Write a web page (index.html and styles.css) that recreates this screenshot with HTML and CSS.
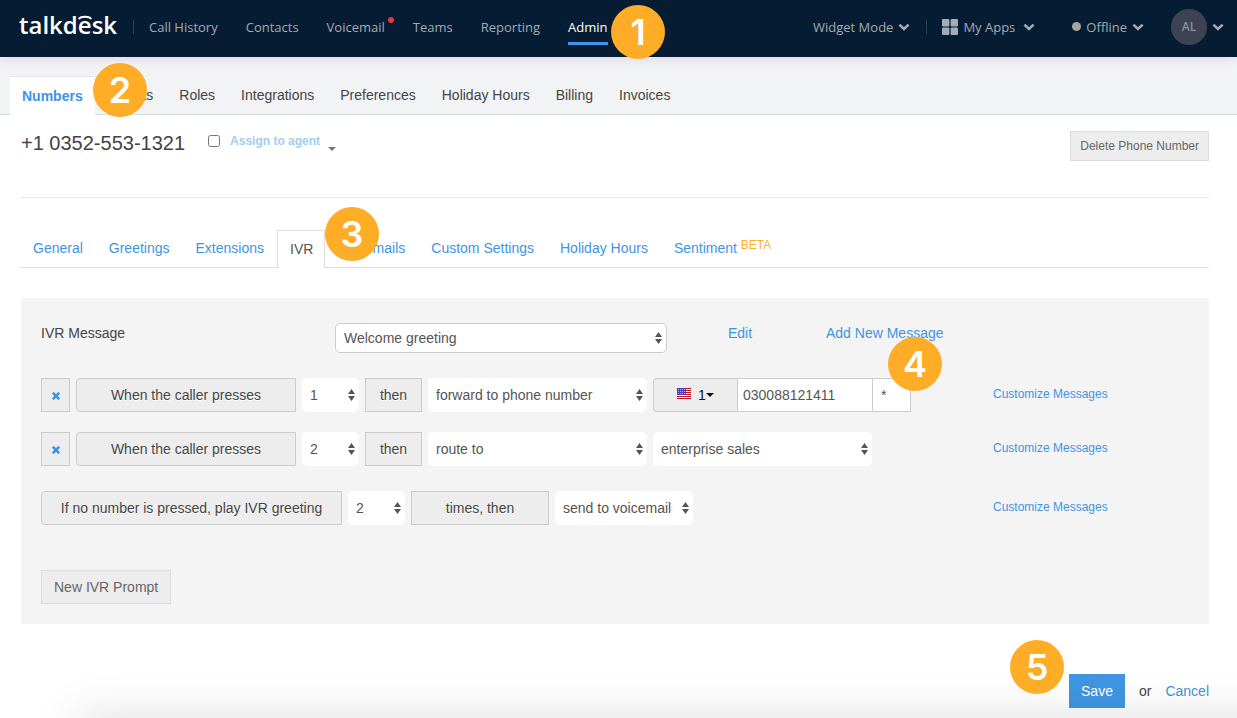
FILE: index.html
```html
<!DOCTYPE html>
<html lang="en">
<head>
    <meta charset="UTF-8">
    <meta name="viewport" content="width=device-width, initial-scale=1.0">
    <title>Talkdesk - IVR</title>
    <link rel="stylesheet" href="styles.css">
</head>
<body>
    <!-- Shared icons -->
    <svg class="icon-defs" aria-hidden="true">
        <symbol id="chevron" viewBox="0 0 12 8">
            <path d="M1.4 1.6 6 6l4.6-4.4" fill="none" stroke="currentColor" stroke-width="2.6"/>
        </symbol>
        <symbol id="remove" viewBox="0 0 8 8">
            <path d="M.8.8l6.4 6.4M7.2.8L.8 7.2" fill="none" stroke="currentColor" stroke-width="2.6"/>
        </symbol>
    </svg>

    <!-- Top bar -->
    <header class="topbar">
        <a class="logo" href="#">talkd<span class="logo-e">e<svg viewBox="0 0 14 5" aria-hidden="true"><path d="M1 4.2C2 .8 12 .8 13 4.2" fill="none" stroke="currentColor" stroke-width="2"/></svg></span>sk</a>
        <nav class="main-nav">
            <a href="#">Call History</a>
            <a href="#">Contacts</a>
            <a class="has-alert" href="#">Voicemail</a>
            <a href="#">Teams</a>
            <a href="#">Reporting</a>
            <span class="marked">
                <a class="active" href="#">Admin</a>
                <span class="step step-1">1</span>
            </span>
        </nav>
        <div class="tools">
            <button class="tool widget-mode">Widget Mode <svg class="chevron"><use href="#chevron"/></svg></button>
            <button class="tool apps">
                <svg class="grid-icon" viewBox="0 0 16 16" fill="currentColor"><rect width="7.4" height="7.4" rx="1"/><rect x="8.6" width="7.4" height="7.4" rx="1"/><rect y="8.6" width="7.4" height="7.4" rx="1"/><rect x="8.6" y="8.6" width="7.4" height="7.4" rx="1"/></svg>
                My Apps <svg class="chevron"><use href="#chevron"/></svg>
            </button>
            <button class="tool status"><span class="dot"></span>Offline <svg class="chevron"><use href="#chevron"/></svg></button>
            <button class="tool account"><span class="avatar">AL</span><svg class="chevron"><use href="#chevron"/></svg></button>
        </div>
    </header>

    <!-- Admin sections -->
    <nav class="sub-nav">
        <span class="marked">
            <a class="active" href="#">Numbers</a>
            <span class="step step-2">2</span>
        </span>
        <a href="#">Agents</a>
        <a href="#">Roles</a>
        <a href="#">Integrations</a>
        <a href="#">Preferences</a>
        <a href="#">Holiday Hours</a>
        <a href="#">Billing</a>
        <a href="#">Invoices</a>
    </nav>

    <main class="content">
        <div class="number-bar">
            <h1>+1 0352-553-1321</h1>
            <input type="checkbox" id="assign">
            <label for="assign">Assign to agent</label>
            <span class="caret"></span>
            <button class="btn btn-small">Delete Phone Number</button>
        </div>

        <nav class="tabs">
            <a href="#">General</a>
            <a href="#">Greetings</a>
            <a href="#">Extensions</a>
            <span class="marked">
                <a class="active" href="#">IVR</a>
                <span class="step step-3">3</span>
            </span>
            <a href="#">Voicemails</a>
            <a href="#">Custom Settings</a>
            <a href="#">Holiday Hours</a>
            <a href="#">Sentiment <span class="beta">BETA</span></a>
        </nav>

        <form class="ivr">
            <div class="message-row">
                <label for="message">IVR Message</label>
                <select id="message" class="select bordered">
                    <option>Welcome greeting</option>
                </select>
                <a href="#">Edit</a>
                <span class="marked">
                    <a href="#">Add New Message</a>
                    <span class="step step-4">4</span>
                </span>
            </div>

            <div class="rule">
                <button type="button" class="remove" aria-label="Remove"><svg><use href="#remove"/></svg></button>
                <label class="addon rounded wide" for="key1">When the caller presses</label>
                <select id="key1" class="select key"><option>1</option></select>
                <span class="addon then">then</span>
                <select class="select action" aria-label="Action"><option>forward to phone number</option></select>
                <div class="phone">
                    <button type="button" class="country">
                        <svg class="flag" viewBox="0 0 14 11" shape-rendering="crispEdges">
                            <rect width="14" height="11" fill="#fff"/>
                            <path d="M0 .5h14M0 2.5h14M0 4.5h14M0 6.5h14M0 8.5h14M0 10.5h14" stroke="#c1121f"/>
                            <rect width="9" height="7" fill="#4a3db8"/>
                            <path d="M1 1.5h8M1 3.5h8M1 5.5h8" stroke="#b9b3ea" stroke-dasharray="1 1"/>
                        </svg>
                        <span>1</span><span class="caret"></span>
                    </button>
                    <input type="text" class="number" aria-label="Phone number" value="030088121411">
                    <input type="text" class="ext" aria-label="Extension" value="*">
                </div>
                <a class="customize" href="#">Customize Messages</a>
            </div>

            <div class="rule">
                <button type="button" class="remove" aria-label="Remove"><svg><use href="#remove"/></svg></button>
                <label class="addon rounded wide" for="key2">When the caller presses</label>
                <select id="key2" class="select key"><option>2</option></select>
                <span class="addon then">then</span>
                <select class="select action" aria-label="Action"><option>route to</option></select>
                <select class="select action" aria-label="Ring group"><option>enterprise sales</option></select>
                <a class="customize" href="#">Customize Messages</a>
            </div>

            <div class="rule fallback">
                <label class="addon rounded repeat" for="times">If no number is pressed, play IVR greeting</label>
                <select id="times" class="select key"><option>2</option></select>
                <span class="addon times">times, then</span>
                <select class="select finish" aria-label="Final action"><option>send to voicemail</option></select>
                <a class="customize" href="#">Customize Messages</a>
            </div>

            <button type="button" class="btn">New IVR Prompt</button>
        </form>

        <div class="form-actions">
            <span class="marked">
                <button class="save">Save</button>
                <span class="step step-5">5</span>
            </span>
            <span>or</span>
            <a href="#">Cancel</a>
        </div>
    </main>
    <div class="bottom-shade"></div>
</body>
</html>
```
FILE: styles.css
```css
* {
    margin: 0;
    padding: 0;
    box-sizing: border-box;
}

body {
    font-family: 'Liberation Sans', Arial, sans-serif;
    font-size: 14px;
    line-height: 20px;
    color: #444;
    background: #fff;
}

a {
    color: #3f94e2;
    text-decoration: none;
}

button,
input,
select {
    font: inherit;
    color: inherit;
}

button {
    cursor: pointer;
}

.icon-defs {
    display: none;
}

.marked {
    position: relative;
    display: inline-flex;
}

/* Top bar */
.topbar {
    position: relative;
    display: flex;
    align-items: center;
    height: 57px;
    padding: 0 13px 4px 19px;
    background: #051c33;
    box-shadow: 0 2px 10px rgba(60, 40, 90, 0.12);
    font-family: 'Open Sans', sans-serif;
    font-size: 13px;
    color: #a3abb4;
    z-index: 2;
}

.logo {
    width: 115px;
    padding-bottom: 4px;
    border-right: 1px solid #2c3e52;
    font-size: 24px;
    font-weight: 600;
    line-height: 10px;
    color: #fff;
}

.logo-e {
    position: relative;
}

.logo-e svg {
    position: absolute;
    top: 7px;
    left: 0;
    width: 14px;
    height: 5px;
}

.main-nav {
    display: flex;
    gap: 28px;
    margin-left: 15px;
}

.main-nav a {
    position: relative;
    color: #a3abb4;
}

.main-nav .has-alert::after {
    content: '';
    position: absolute;
    top: 0;
    right: -9px;
    width: 6px;
    height: 6px;
    border-radius: 50%;
    background: #f03434;
}

.main-nav .active {
    color: #fff;
}

.main-nav .active::after {
    content: '';
    position: absolute;
    left: 0;
    right: 0;
    bottom: -8px;
    height: 3px;
    background: #4096e8;
}

.tools {
    display: flex;
    align-items: center;
    margin-left: auto;
}

.tool {
    display: flex;
    align-items: center;
    gap: 5px;
    border: 0;
    background: none;
}

.chevron {
    width: 12px;
    height: 8px;
}

.widget-mode {
    padding-right: 16px;
    border-right: 1px solid #2c3e52;
    line-height: 14px;
}

.apps {
    margin: 0 37px 0 15px;
}

.apps .chevron {
    margin-left: 3px;
}

.grid-icon {
    width: 16px;
    height: 16px;
}

.dot {
    width: 9px;
    height: 9px;
    border-radius: 50%;
    background: #a5a5a0;
}

.status {
    margin-right: 27px;
}

.avatar {
    width: 36px;
    border-radius: 50%;
    background: #3e4354;
    font-size: 12px;
    font-weight: 600;
    line-height: 36px;
    color: #8d909b;
}

/* Numbered callouts */
.step {
    position: absolute;
    width: 54px;
    height: 54px;
    border-radius: 50%;
    background: #ffad27;
    font-family: Inter, sans-serif;
    font-size: 36px;
    font-weight: 600;
    line-height: 54px;
    text-align: center;
    color: #fff;
    z-index: 5;
}

.step-1 {
    top: -12px;
    left: 43px;
}

.step-2 {
    top: -13px;
    left: 83px;
}

.step-3 {
    top: -23px;
    left: 48px;
}

.step-4 {
    top: 14px;
    left: 62px;
}

.step-5 {
    top: -34px;
    left: -59px;
}

/* Admin sections */
.sub-nav {
    display: flex;
    align-items: flex-end;
    height: 58px;
    padding-left: 10px;
    background: #f2f3f5;
    border-bottom: 1px solid #d3dedd;
}

.sub-nav a {
    padding: 8px 13px 9px;
    color: #444;
}

.sub-nav .active {
    margin: 0 2px -1px 0;
    padding: 9px 12px;
    border-top: 1px solid #e6e9ea;
    background: #fff;
    font-weight: bold;
    color: #3f94e2;
}

/* Phone number */
.content {
    padding: 16px 28px 10px 21px;
}

.number-bar {
    display: flex;
    align-items: flex-start;
    height: 67px;
    border-bottom: 1px solid #e8e8e8;
}

.number-bar h1 {
    font-size: 20px;
    font-weight: normal;
    line-height: 24px;
}

.number-bar input {
    width: 12px;
    height: 12px;
    margin: 4px 10px 0 23px;
}

.number-bar label {
    font-size: 12px;
    font-weight: bold;
    color: #9fcdf3;
}

.caret {
    border: 4px solid transparent;
    border-top-color: currentColor;
    border-bottom: 0;
}

.number-bar .caret {
    margin: 16px 0 0 8px;
    color: #777;
}

.btn {
    height: 34px;
    padding: 0 12px;
    border: 1px solid #dcdcdc;
    background: #ededed;
    color: #666;
}

.btn-small {
    height: 30px;
    margin-left: auto;
    padding: 0 9px;
    font-size: 12px;
}

/* Number settings tabs */
.tabs {
    display: flex;
    margin-top: 32px;
    border-bottom: 1px solid #ddd;
}

.tabs a {
    padding: 8px 13px;
}

.tabs a:first-child {
    padding-left: 12px;
}

.tabs .active {
    margin-bottom: -1px;
    padding: 8px 11px;
    border: 1px solid #ddd;
    border-bottom: 0;
    background: #fff;
    color: #555;
}

.beta {
    position: relative;
    top: -4px;
    font-size: 12px;
    color: #ffb01f;
}

/* IVR rules */
.ivr {
    margin-top: 30px;
    padding: 25px 20px 20px;
    background: #f4f4f4;
}

.message-row {
    display: grid;
    grid-template-columns: 294px 332px 98px 1fr;
    align-items: start;
    margin-bottom: 25px;
}

.message-row > a {
    padding-left: 61px;
}

.message-row .marked {
    margin-left: 61px;
}

.select {
    height: 34px;
    padding: 0 8px;
    border: 0;
    border-radius: 5px;
    appearance: none;
    background: #fff url("data:image/svg+xml,%3Csvg xmlns='http://www.w3.org/2000/svg' width='7' height='12'%3E%3Cpath d='M3.5 0L7 5H0zM3.5 12L7 7H0z' fill='%23555'/%3E%3C/svg%3E") no-repeat right 4px center;
    color: #555;
}

.bordered {
    height: 30px;
    border: 1px solid #ccc;
}

.rule {
    display: flex;
    gap: 6px;
    margin-bottom: 20px;
}

.remove {
    width: 29px;
    height: 34px;
    border: 1px solid #ccc;
    background: #ededed;
    color: #3f94e2;
}

.remove svg {
    width: 8px;
    height: 8px;
}

.addon {
    height: 34px;
    border: 1px solid #ccc;
    background: #ededed;
    line-height: 32px;
    text-align: center;
    text-shadow: 0 1px 0 #fff;
}

.rounded {
    border-radius: 4px 0 0 4px;
}

.wide {
    width: 220px;
}

.key,
.then {
    width: 57px;
}

.action {
    width: 219px;
}

.phone {
    display: flex;
}

.country {
    display: flex;
    align-items: center;
    width: 84px;
    padding-left: 23px;
    border: 1px solid #ccc;
    border-right: 0;
    border-radius: 4px 0 0 4px;
    background: #ededed;
    color: #111;
}

.flag {
    width: 14px;
    height: 11px;
    margin: 0 7px 4px 0;
}

.phone input {
    border: 1px solid #ccc;
    padding: 0 5px;
    background: #fff;
    color: #555;
}

.phone .number {
    width: 136px;
}

.phone .ext {
    width: 38px;
    border-left: 0;
    padding: 0 8px;
}

.customize {
    width: 196px;
    margin-left: auto;
    font-size: 12px;
    line-height: 32px;
}

.fallback {
    margin: 25px 0 45px;
}

.repeat {
    width: 301px;
}

.times,
.finish {
    width: 138px;
}

/* Save / cancel */
.form-actions {
    display: flex;
    justify-content: flex-end;
    align-items: center;
    gap: 14px;
    margin-top: 50px;
}

.save {
    height: 34px;
    padding: 0 12px;
    border: 0;
    background: #4096e2;
    color: #fff;
}

.bottom-shade {
    position: fixed;
    left: 85px;
    right: -60px;
    bottom: -40px;
    height: 30px;
    box-shadow: 0 0 50px 8px rgba(0, 0, 0, 0.15);
    pointer-events: none;
}
```
